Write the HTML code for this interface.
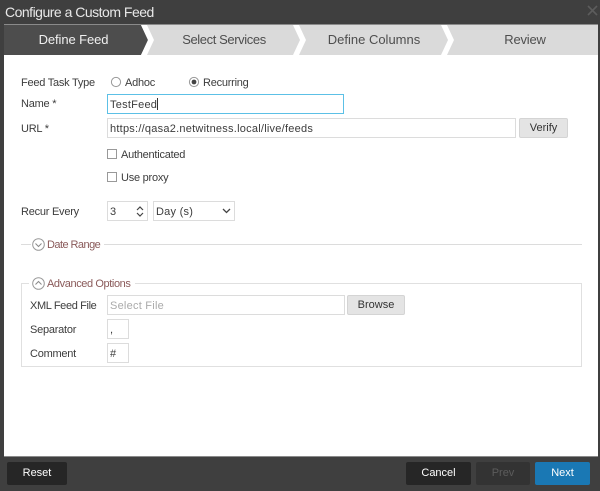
<!DOCTYPE html>
<html><head><meta charset="utf-8">
<style>
html,body{margin:0;padding:0;width:600px;height:491px;overflow:hidden;background:#3f3f3f}
body{position:relative;font-family:"Liberation Sans",sans-serif;font-size:11px;color:#3c3c3c}
.a{position:absolute;white-space:nowrap}
.t{position:absolute;white-space:nowrap;line-height:14px;height:14px;letter-spacing:-.24px}
.i{position:absolute;box-sizing:border-box;background:#fff;border:1px solid #dcdcdc;line-height:20px;padding-left:2px;color:#3c3c3c;white-space:nowrap;letter-spacing:.24px}
.b{position:absolute;box-sizing:border-box;background:#e4e4e4;border:1px solid #d4d4d4;border-radius:2px;text-align:center;color:#333;line-height:19px}
.f{position:absolute;box-sizing:border-box;border-radius:2px;text-align:center;color:#fff;font-size:11px;height:23px;line-height:23px;top:462px;background:#262626}
.tab{position:absolute;top:25px;height:30px;line-height:30px;font-size:13px;color:#4e4e4e;text-align:center}
.cb{position:absolute;box-sizing:border-box;width:10px;height:10px;border:1px solid #999;background:#fff}
</style></head><body>
<div class="a" style="left:5px;top:3px;font-size:14px;letter-spacing:-.5px;line-height:18px;color:#e8e8e8;">Configure a Custom Feed</div>
<svg class="a" style="left:587px;top:5px" width="11" height="11" viewBox="0 0 11 11"><path d="M1 1L10 10M10 1L1 10" stroke="#5c5c5c" stroke-width="1.6" fill="none"/></svg>

<div class="a" style="left:4px;top:24px;width:594px;height:432px;background:#fff;border-top:1px solid #8a8a8a"></div>
<svg class="a" style="left:4px;top:25px" width="594" height="30" viewBox="0 0 594 30">
<rect width="594" height="30" fill="#dadada"/>
<path d="M0 0H137L144 15L137 30H0Z" fill="#4d4d4d"/>
<path d="M137 0H143L150 15L143 30H137L144 15Z" fill="#fff"/>
<path d="M289 0H295L302 15L295 30H289L296 15Z" fill="#fff"/>
<path d="M437 0H443L450 15L443 30H437L444 15Z" fill="#fff"/>
</svg>
<div class="tab" style="left:4px;width:139px;color:#f0f0f0;letter-spacing:-.1px">Define Feed</div>
<div class="tab" style="left:154px;width:140px;letter-spacing:-.4px">Select Services</div>
<div class="tab" style="left:304px;width:140px">Define Columns</div>
<div class="tab" style="left:454px;width:182px;width:142px;letter-spacing:-.2px">Review</div>

<div class="t" style="left:21px;top:76px">Feed Task Type</div>
<svg class="a" style="left:110px;top:76px" width="12" height="12"><circle cx="6" cy="6" r="4.6" fill="#fff" stroke="#999"/></svg>
<div class="t" style="left:125px;top:76px">Adhoc</div>
<svg class="a" style="left:188px;top:76px" width="12" height="12"><circle cx="6" cy="6" r="4.6" fill="#fff" stroke="#999"/><circle cx="6" cy="6" r="2.4" fill="#444"/></svg>
<div class="t" style="left:203px;top:76px">Recurring</div>

<div class="t" style="left:21px;top:97px">Name *</div>
<div class="i" style="left:107px;top:94px;width:237px;height:20px;border:1px solid #5cc0e6;">TestFeed<span style="display:inline-block;width:1px;height:12px;background:#333;vertical-align:-2px"></span></div>

<div class="t" style="left:21px;top:122px">URL *</div>
<div class="i" style="left:107px;top:118px;width:409px;height:20px;">https://qasa2.netwitness.local/live/feeds</div>
<div class="b" style="left:519px;top:118px;width:49px;height:20px">Verify</div>

<div class="cb" style="left:107px;top:149px"></div>
<div class="t" style="left:121px;top:148px">Authenticated</div>
<div class="cb" style="left:107px;top:172px"></div>
<div class="t" style="left:121px;top:171px">Use proxy</div>

<div class="t" style="left:21px;top:205px">Recur Every</div>
<div class="i" style="left:107px;top:201px;width:41px;height:20px;">3</div>
<svg class="a" style="left:135px;top:205px" width="10" height="13" viewBox="0 0 10 13"><path d="M2 5L5 2L8 5M2 8L5 11L8 8" stroke="#444" stroke-width="1.2" fill="none"/></svg>
<div class="i" style="left:153px;top:201px;width:82px;height:20px;">Day (s)</div>
<svg class="a" style="left:222px;top:208px" width="9" height="6" viewBox="0 0 9 6"><path d="M1 1L4.5 4.5L8 1" stroke="#444" stroke-width="1.3" fill="none"/></svg>

<div class="a" style="left:21px;top:244px;width:10px;height:1px;background:#dcdcdc"></div>
<svg class="a" style="left:32px;top:238px" width="13" height="13" viewBox="0 0 13 13"><circle cx="6.5" cy="6.5" r="5.8" fill="#fff" stroke="#999"/><path d="M3.5 5.5L6.5 8.5L9.5 5.5" stroke="#888" fill="none"/></svg>
<div class="t" style="left:47px;top:238px;color:#8a5a5a;letter-spacing:-.55px">Date Range</div>
<div class="a" style="left:104px;top:244px;width:478px;height:1px;background:#dcdcdc"></div>

<div class="a" style="left:21px;top:283px;width:561px;height:84px;box-sizing:border-box;border:1px solid #e0e0e0"></div>
<div class="a" style="left:29px;top:276px;width:106px;height:14px;background:#fff"></div>
<svg class="a" style="left:32px;top:277px" width="13" height="13" viewBox="0 0 13 13"><circle cx="6.5" cy="6.5" r="5.8" fill="#fff" stroke="#999"/><path d="M3.5 7.5L6.5 4.5L9.5 7.5" stroke="#888" fill="none"/></svg>
<div class="t" style="left:47px;top:277px;color:#8a5a5a;letter-spacing:-.4px">Advanced Options</div>

<div class="t" style="left:30px;top:299px;letter-spacing:-.36px">XML Feed File</div>
<div class="i" style="left:107px;top:295px;width:238px;height:20px;color:#aaa">Select File</div>
<div class="b" style="left:347px;top:295px;width:58px;height:20px">Browse</div>
<div class="t" style="left:30px;top:323px">Separator</div>
<div class="i" style="left:107px;top:319px;width:22px;height:20px;">,</div>
<div class="t" style="left:30px;top:347px">Comment</div>
<div class="i" style="left:107px;top:343px;width:22px;height:20px;">#</div>

<div class="a" style="left:4px;top:456px;width:594px;height:1px;background:#8a8a8a"></div>
<div class="f" style="left:7px;width:60px">Reset</div>
<div class="f" style="left:406px;width:65px">Cancel</div>
<div class="f" style="left:476px;width:54px;background:#333;color:#5c5c5c">Prev</div>
<div class="f" style="left:535px;width:55px;background:#1a78b4">Next</div>
</body></html>
